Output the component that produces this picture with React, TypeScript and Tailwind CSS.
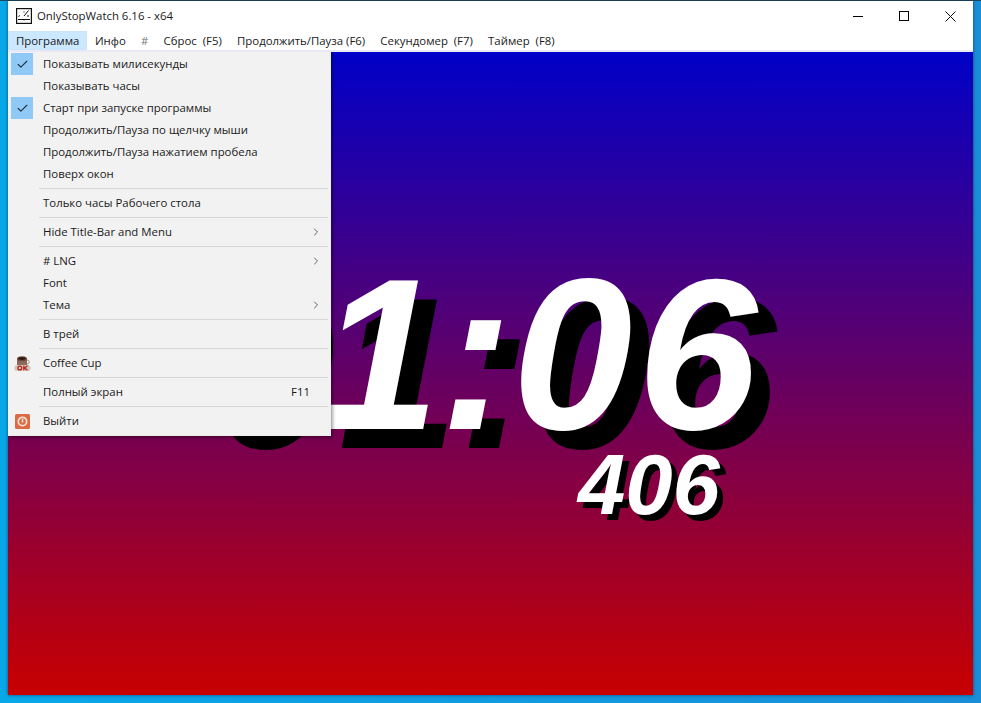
import React from 'react';
import { Check, ChevronRight } from 'lucide-react';

type Item = {
  label?: string;
  checked?: boolean;
  arrow?: boolean;
  hint?: string;
  icon?: 'cup' | 'power';
  sep?: boolean;
};

const menuBar = [
  'Инфо',
  '#',
  'Сброс  (F5)',
  'Продолжить/Пауза (F6)',
  'Секундомер  (F7)',
  'Таймер  (F8)',
];

const items: Item[] = [
  { label: 'Показывать милисекунды', checked: true },
  { label: 'Показывать часы' },
  { label: 'Старт при запуске программы', checked: true },
  { label: 'Продолжить/Пауза по щелчку мыши' },
  { label: 'Продолжить/Пауза нажатием пробела' },
  { label: 'Поверх окон' },
  { sep: true },
  { label: 'Только часы Рабочего стола' },
  { sep: true },
  { label: 'Hide Title-Bar and Menu', arrow: true },
  { sep: true },
  { label: '# LNG', arrow: true },
  { label: 'Font' },
  { label: 'Тема', arrow: true },
  { sep: true },
  { label: 'В трей' },
  { sep: true },
  { label: 'Coffee Cup', icon: 'cup' },
  { sep: true },
  { label: 'Полный экран', hint: 'F11' },
  { sep: true },
  { label: 'Выйти', icon: 'power' },
];

const AppIcon = () => (
  <svg width="16" height="16" viewBox="0 0 16 16" fill="none" stroke="#111" strokeWidth="1.2">
    <rect x="0.6" y="0.6" width="14.8" height="14.8" />
    <path d="M2 11.5h12" strokeWidth="1" />
    <path d="M4 7.5l-1.5 1M12.5 2.5L8 8" strokeWidth="1" />
    <path d="M8 3.5v1M8 11v1.5M11 8h2" strokeWidth="1" />
  </svg>
);

const CupIcon = () => (
  <svg width="17" height="17" viewBox="0 0 17 17">
    <path d="M3 4h10v6c0 1.5-2 2.5-5 2.5S3 11.500 3 10z" fill="#8a6a5c" />
    <ellipse cx="8" cy="3.800" rx="5" ry="2.500" fill="#6e4a3a" />
    <ellipse cx="8" cy="3.600" rx="3.600" ry="1.300" fill="#2c1a12" />
    <path d="M13 5c3 0 3 4 0 4" fill="none" stroke="#a58b7f" strokeWidth="1" />
    <rect x="0.500" y="10" width="16" height="6" rx="2.500" fill="#d3c5bb" />
    <circle cx="5.800" cy="13" r="1.900" fill="none" stroke="#b5261a" strokeWidth="1.300" />
    <path d="M9.800 10.800v4.400M13.500 10.800l-3 2.200 3 2.200" fill="none" stroke="#b5261a" strokeWidth="1.300" />
  </svg>
);

const PowerIcon = () => (
  <svg width="15" height="15" viewBox="0 0 15 15">
    <rect width="15" height="15" rx="1.500" fill="#db6a45" />
    <circle cx="7.500" cy="7.500" r="4.200" fill="none" stroke="#f8e6dc" strokeWidth="1.700" />
    <path d="M7.500 5v3.500" stroke="#f8e6dc" strokeWidth="1.500" />
  </svg>
);

const MenuRow = ({ item }: { item: Item }) => {
  if (item.sep) {
    return <div className="my-[3px] ml-[31px] mr-[2px] h-px bg-[#d7d7d7]" />;
  }
  return (
    <div className="flex h-[22px] items-center pr-[8px]">
      <div className="ml-[3px] flex h-[22px] w-[22px] items-center justify-center">
        {item.checked && (
          <div className="flex h-[22px] w-[22px] items-center justify-center bg-[#90c8f6]">
            <Check size={13} strokeWidth={2} className="text-[#20323f]" />
          </div>
        )}
        {item.icon === 'cup' && <CupIcon />}
        {item.icon === 'power' && <PowerIcon />}
      </div>
      <span className="ml-[10px] flex-1">{item.label}</span>
      {item.hint && <span className="mr-[12px]">{item.hint}</span>}
      {item.arrow && <ChevronRight size={12} strokeWidth={1.5} className="text-[#333]" />}
    </div>
  );
};

export default function App() {
  return (
    <div className="flex h-[703px] w-[981px] border-t border-[#1b4a60] bg-[linear-gradient(to_right,#08a8e8,#1a8ed6)] px-2 pb-2 font-['Open_Sans','Noto_Sans',sans-serif] text-[11.4px] text-[#1a1a1a]">
      <div className="flex min-w-0 flex-1 flex-col shadow-[0_0_3px_rgba(20,20,60,0.7)]">
        <div className="flex h-[30px] shrink-0 items-center bg-white pl-[8px]">
          <AppIcon />
          <span className="ml-[5px] text-[11.4px]">OnlyStopWatch 6.16 - x64</span>
          <div className="ml-auto flex h-full items-center">
            <div className="flex h-full w-[46px] items-center justify-center">
              <div className="h-px w-[10px] bg-black" />
            </div>
            <div className="flex h-full w-[46px] items-center justify-center">
              <div className="h-[10px] w-[10px] border border-black" />
            </div>
            <div className="flex h-full w-[46px] items-center justify-center">
              <svg width="11" height="11" viewBox="0 0 11 11" stroke="#111" strokeWidth="1">
                <path d="M0.5 0.5l10 10M10.5 0.5l-10 10" />
              </svg>
            </div>
          </div>
        </div>
        <div className="flex h-[19px] shrink-0 items-center bg-white">
          <div className="flex h-[19px] items-center border border-[#cce4f7] bg-[#cce8ff] px-[7px]">Программа</div>
          <div className="flex items-center">
            {menuBar.map((m) => (
              <span key={m} className={m === '#' ? 'whitespace-pre px-[7.6px] text-[#777]' : 'whitespace-pre px-[7.6px]'}>
                {m}
              </span>
            ))}
          </div>
        </div>
        <div className="h-[2px] shrink-0 bg-[#e8e8f6]" />
        <div className="relative flex-1 overflow-hidden bg-[linear-gradient(to_bottom,#0000c8,#c80000)]">
          <div className="absolute left-[188px] top-[194px] font-['Liberation_Sans',Arial,sans-serif] text-[216px] font-bold italic leading-none text-white [text-shadow:19px_19px_0_#000] whitespace-nowrap">
            <span className="tracking-[3px]">0</span>
            <span className="tracking-[1px]">1</span>
            <span>:</span>
            <span className="tracking-[5px]">06</span>
          </div>
          <div className="absolute left-[570px] top-[390px] font-['Liberation_Sans',Arial,sans-serif] text-[85px] font-bold italic leading-none text-white [text-shadow:6px_6px_0_#000]">
            406
          </div>
          <div className="absolute left-0 top-0 w-[323px] border-b border-r border-[#ececec] bg-[#f2f2f2] pt-px pb-[3px] shadow-[2px_2px_3px_rgba(0,0,0,0.35)]">
            {items.map((item, i) => (
              <MenuRow key={i} item={item} />
            ))}
          </div>
        </div>
      </div>
    </div>
  );
}
